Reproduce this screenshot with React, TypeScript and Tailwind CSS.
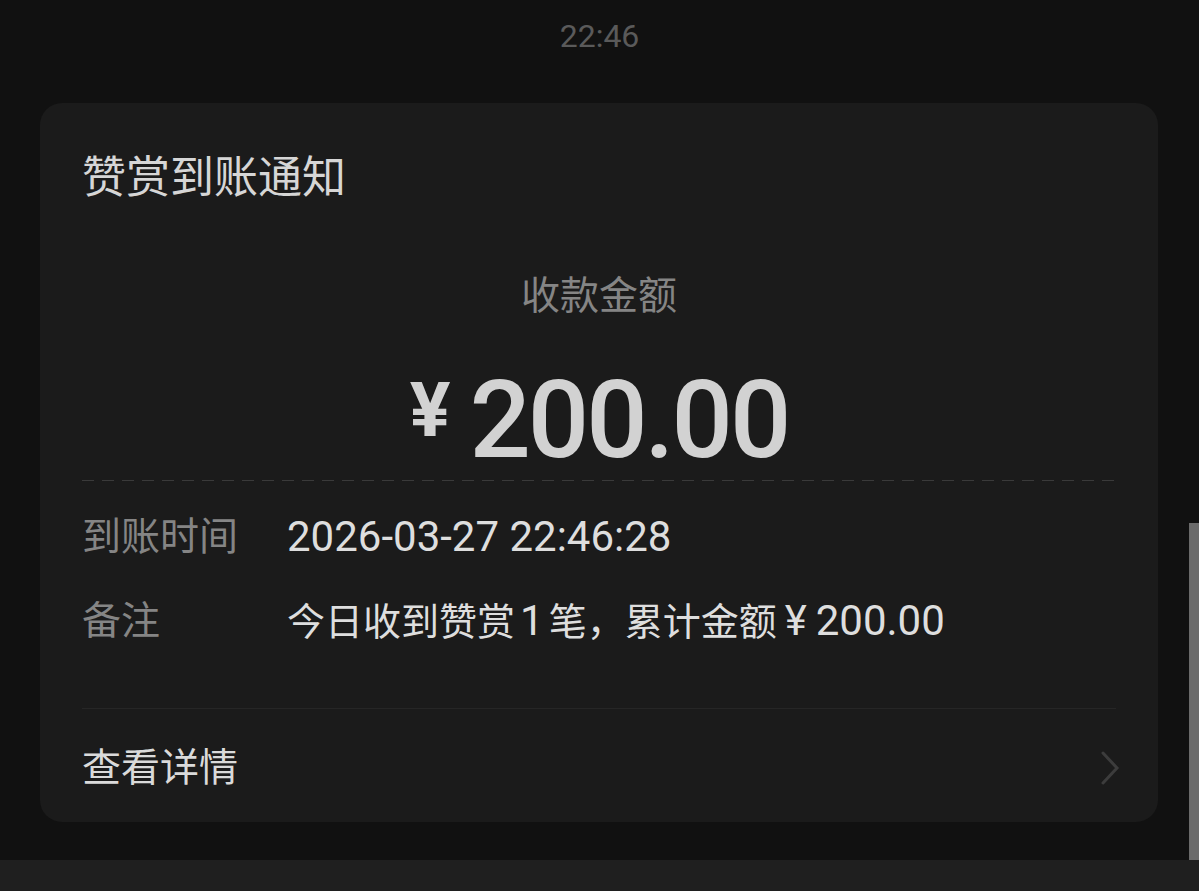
import React from 'react';

const font = { fontFamily: "Roboto, 'Noto Sans CJK SC', sans-serif" };

const InfoRow: React.FC<{ label: string; className?: string; children: React.ReactNode }> = ({ label, className, children }) => (
    <div className={`flex h-[48px] items-center ${className ?? ''}`}>
        <div className="w-[205px] shrink-0 text-[39px] leading-[48px] text-[#858585]">{label}</div>
        <div className="text-[42px] leading-[48px] text-[#dedede] whitespace-nowrap">{children}</div>
    </div>
);

const App: React.FC = () => {
    return (
        <div className="relative flex h-[891px] w-[1199px] flex-col overflow-hidden bg-[#111111]" style={font}>
            <div className="flex-1">
                <div className="mt-[14px] h-[44px] text-center text-[32px] leading-[44px] text-[#5a5a5a]">22:46</div>

                <div className="mx-[40px] mt-[45px] w-[1118px] rounded-[22px] bg-[#1b1b1b] px-[42px]">
                    <div className="pt-[50px] text-[44px] leading-[50px] text-[#d6d6d6]">赞赏到账通知</div>

                    <div className="mt-[69px] text-center text-[39px] leading-[48px] text-[#858585]">收款金额</div>

                    <div className="mt-[40px] flex h-[120px] items-start justify-center text-[#d2d2d2]">
                        <span className="mt-[12px] text-[76px] font-bold leading-none">¥</span>
                        <span className="ml-[19px] text-[108px] font-medium leading-[120px] tracking-[-3px]">200.00</span>
                    </div>

                    <div className="h-px w-full bg-[repeating-linear-gradient(to_right,#3a3a3a_0px,#3a3a3a_12px,transparent_12px,transparent_20px)]" />

                    <InfoRow className="mt-[32px]" label="到账时间">2026-03-27 22:46:28</InfoRow>
                    <InfoRow className="mt-[36px]" label="备注">
                        <span className="text-[38px]">今日收到赞赏</span>
                        <span className="mx-[5px]">1</span>
                        <span className="text-[38px]">笔，累计金额</span>
                        <span className="ml-[8px] mr-[9px]">¥</span>
                        <span>200.00</span>
                    </InfoRow>

                    <div className="mt-[63px] flex h-[114px] items-center justify-between border-t border-[#262626] pt-[4px]">
                        <span className="text-[39px] leading-[48px] text-[#dadada]">查看详情</span>
                        <svg width="22" height="36" viewBox="0 0 22 36" className="mr-[-5px]">
                            <path d="M4 3 L18 18 L4 33" fill="none" stroke="#3c3c3c" strokeWidth="3" strokeLinecap="round" />
                        </svg>
                    </div>
                </div>
            </div>
            <div className="h-[31px] bg-[#1f1f1f]" />
            <div className="absolute right-0 top-[523px] h-[337px] w-[10px] bg-[#6b6b6b]" />
        </div>
    );
};

export default App;
